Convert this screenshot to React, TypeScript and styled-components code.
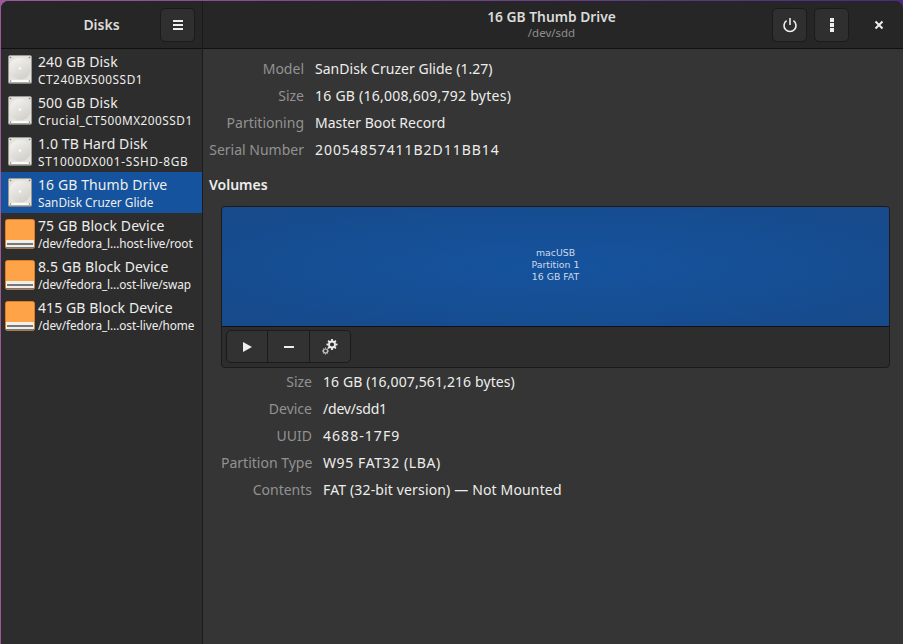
import React from 'react';
import styled, { createGlobalStyle } from 'styled-components';

const GlobalStyle = createGlobalStyle`
  html, body {
    margin: 0;
    padding: 0;
    width: 903px;
    height: 644px;
    overflow: hidden;
    background: linear-gradient(90deg, #9b5a9a, #4b2a80);
  }
  * { box-sizing: border-box; }
`;

type Drive = { title: string; sub: string; kind: 'disk' | 'block'; tracking: number; selected?: boolean };

const drives: Drive[] = [
  { title: '240 GB Disk', sub: 'CT240BX500SSD1', kind: 'disk', tracking: 0.55 },
  { title: '500 GB Disk', sub: 'Crucial_CT500MX200SSD1', kind: 'disk', tracking: 0.5 },
  { title: '1.0 TB Hard Disk', sub: 'ST1000DX001-SSHD-8GB', kind: 'disk', tracking: 0.7 },
  { title: '16 GB Thumb Drive', sub: 'SanDisk Cruzer Glide', kind: 'disk', tracking: 0, selected: true },
  { title: '75 GB Block Device', sub: '/dev/fedora_l…host-live/root', kind: 'block', tracking: -0.08 },
  { title: '8.5 GB Block Device', sub: '/dev/fedora_l…ost-live/swap', kind: 'block', tracking: -0.08 },
  { title: '415 GB Block Device', sub: '/dev/fedora_l…ost-live/home', kind: 'block', tracking: -0.08 },
];

const driveInfo: [string, string, number][] = [
  ['Model', 'SanDisk Cruzer Glide (1.27)', 0.03],
  ['Size', '16 GB (16,008,609,792 bytes)', 0.25],
  ['Partitioning', 'Master Boot Record', 0],
  ['Serial Number', '20054857411B2D11BB14', 0.95],
];

const volumeInfo: [string, string, number][] = [
  ['Size', '16 GB (16,007,561,216 bytes)', 0.1],
  ['Device', '/dev/sdd1', -0.2],
  ['UUID', '4688-17F9', 1.05],
  ['Partition Type', 'W95 FAT32 (LBA)', 0.6],
  ['Contents', 'FAT (32-bit version) — Not Mounted', 0.15],
];

function DiskIcon() {
  return (
    <svg width="24" height="29" viewBox="0 0 24 29">
      <defs>
        <linearGradient id="platter" x1="0.2" y1="0" x2="0.8" y2="1">
          <stop offset="0" stopColor="#f4f3f0" />
          <stop offset="1" stopColor="#cfcec8" />
        </linearGradient>
      </defs>
      <rect x="0.5" y="0.5" width="23" height="28" rx="1.5" fill="#e3e2dd" stroke="#9a9a95" />
      <circle cx="12" cy="13.500" r="10.800" fill="url(#platter)" />
      <circle cx="12" cy="13.500" r="1.200" fill="#fbfbf9" />
      <rect x="1" y="25" width="22" height="2.500" fill="#fafaf8" />
      <rect x="1" y="27.500" width="22" height="1" fill="#6d6d69" />
      <circle cx="2.500" cy="2.500" r="0.800" fill="#77767b" />
      <circle cx="21.500" cy="2.500" r="0.800" fill="#77767b" />
      <circle cx="2.500" cy="26" r="0.800" fill="#77767b" />
      <circle cx="21.500" cy="26" r="0.800" fill="#77767b" />
    </svg>
  );
}

function BlockIcon() {
  return (
    <svg width="30" height="30" viewBox="0 0 30 30">
      <rect x="0.5" y="0.5" width="29" height="29" rx="2" fill="#ffa348" stroke="#e07f22" />
      <rect x="1" y="21" width="28" height="8" fill="#f2efe9" />
      <rect x="2" y="24" width="26" height="2" fill="#77767b" />
      <rect x="1" y="28" width="28" height="1.5" fill="#77767b" />
    </svg>
  );
}

function MenuIcon() {
  return (
    <svg width="16" height="16" viewBox="0 0 16 16" fill="#eeeeec">
      <rect x="3" y="3" width="10" height="2" />
      <rect x="3" y="7" width="10" height="2" />
      <rect x="3" y="11" width="10" height="2" />
    </svg>
  );
}

function PowerIcon() {
  return (
    <svg width="16" height="16" viewBox="0 0 16 16" fill="none" stroke="#eeeeec" strokeWidth="1.6">
      <path d="M4.6 3.6a6 6 0 1 0 6.8 0" />
      <path d="M8 1v7" />
    </svg>
  );
}

function DotsIcon() {
  return (
    <svg width="16" height="16" viewBox="0 0 16 16" fill="#eeeeec">
      <rect x="6" y="1" width="4" height="4" />
      <rect x="6" y="6" width="4" height="4" />
      <rect x="6" y="11" width="4" height="4" />
    </svg>
  );
}

function CloseIcon() {
  return (
    <svg width="16" height="16" viewBox="0 0 16 16" stroke="#eeeeec" strokeWidth="2">
      <path d="M4.5 4.5l7 7M11.500 4.500l-7 7" />
    </svg>
  );
}

function PlayIcon() {
  return (
    <svg width="16" height="16" viewBox="0 0 16 16" fill="#eeeeec">
      <path d="M4 3l9 5-9 5z" />
    </svg>
  );
}

function MinusIcon() {
  return (
    <svg width="16" height="16" viewBox="0 0 16 16" fill="#eeeeec">
      <rect x="3" y="7" width="10" height="2" />
    </svg>
  );
}

const gearTeeth = [0, 45, 90, 135, 180, 225, 270, 315];

function GearsIcon() {
  return (
    <svg width="16" height="16" viewBox="0 0 16 16" fill="none" stroke="#eeeeec">
      <g transform="translate(10 5.500)">
        <circle r="3" strokeWidth="1.800" />
        {gearTeeth.map((a) => (
          <rect key={a} x="-0.9" y="-5.500" width="1.800" height="2" fill="#eeeeec" stroke="none" transform={`rotate(${a})`} />
        ))}
      </g>
      <g transform="translate(3.500 12)" opacity="0.8">
        <circle r="2" strokeWidth="1.100" />
        {gearTeeth.map((a) => (
          <rect key={a} x="-0.5" y="-3.500" width="1" height="1.200" fill="#eeeeec" stroke="none" transform={`rotate(${a})`} />
        ))}
      </g>
    </svg>
  );
}

export default function App() {
  return (
    <>
      <GlobalStyle />
      <Window>
        <Sidebar>
          <SideHeader>
            <SideTitle>Disks</SideTitle>
            <MenuButton>
              <MenuIcon />
            </MenuButton>
          </SideHeader>
          <DriveList>
            {drives.map((d) => (
              <DriveRow key={d.title} $selected={d.selected}>
                <IconSlot>{d.kind === 'disk' ? <DiskIcon /> : <BlockIcon />}</IconSlot>
                <DriveText>
                  <DriveTitle>{d.title}</DriveTitle>
                  <DriveSub $tracking={d.tracking}>{d.sub}</DriveSub>
                </DriveText>
              </DriveRow>
            ))}
          </DriveList>
        </Sidebar>
        <Content>
          <MainHeader>
            <HeaderTitles>
              <HeaderTitle>16 GB Thumb Drive</HeaderTitle>
              <HeaderSub>/dev/sdd</HeaderSub>
            </HeaderTitles>
            <HeaderActions>
              <HeaderButton>
                <PowerIcon />
              </HeaderButton>
              <HeaderButton>
                <DotsIcon />
              </HeaderButton>
              <CloseButton>
                <CloseIcon />
              </CloseButton>
            </HeaderActions>
          </MainHeader>
          <Main>
            <InfoGrid $labelWidth={95}>
              {driveInfo.map(([k, v, t]) => (
                <React.Fragment key={k}>
                  <InfoLabel>{k}</InfoLabel>
                  <InfoValue $tracking={t}>{v}</InfoValue>
                </React.Fragment>
              ))}
            </InfoGrid>
            <VolumesHeading>Volumes</VolumesHeading>
            <VolumePanel>
              <PartitionBar>
                <span>macUSB</span>
                <span>Partition 1</span>
                <span>16 GB FAT</span>
              </PartitionBar>
              <VolumeToolbar>
                <ButtonGroup>
                  <GroupButton>
                    <PlayIcon />
                  </GroupButton>
                  <GroupButton>
                    <MinusIcon />
                  </GroupButton>
                  <GroupButton>
                    <GearsIcon />
                  </GroupButton>
                </ButtonGroup>
              </VolumeToolbar>
            </VolumePanel>
            <VolumeGrid $labelWidth={91}>
              {volumeInfo.map(([k, v, t]) => (
                <React.Fragment key={k}>
                  <InfoLabel>{k}</InfoLabel>
                  <InfoValue $tracking={t}>{v}</InfoValue>
                </React.Fragment>
              ))}
            </VolumeGrid>
          </Main>
        </Content>
      </Window>
    </>
  );
}

const Window = styled.div`
  display: flex;
  width: 902px;
  height: 643px;
  margin: 1px 0 0 1px;
  border-radius: 8px 8px 0 0;
  overflow: hidden;
  background: #353535;
  color: #eeeeec;
  font-family: 'Noto Sans', 'Open Sans', sans-serif;
  font-size: 14px;
`;

const Sidebar = styled.aside`
  display: flex;
  flex-direction: column;
  flex: none;
  width: 202px;
  background: #2d2d2d;
  border-right: 1px solid #1b1b1b;
`;

const SideHeader = styled.div`
  display: flex;
  align-items: center;
  flex: none;
  height: 48px;
  padding: 0 7px 0 0;
  background: #262626;
  border-bottom: 1px solid #111;
`;

const SideTitle = styled.div`
  flex: 1;
  padding-left: 42px;
  text-align: center;
  font-weight: 600;
  font-size: 14px;
  color: #dcdcda;
`;

const MenuButton = styled.div`
  display: flex;
  align-items: center;
  justify-content: center;
  width: 35px;
  height: 34px;
  background: #2f2f2f;
  border: 1px solid #1b1b1b;
  border-radius: 5px;
`;

const DriveList = styled.div`
  display: flex;
  flex-direction: column;
`;

const DriveRow = styled.div<{ $selected?: boolean }>`
  display: flex;
  align-items: center;
  height: 41px;
  padding-left: 1px;
  background: ${(p) => (p.$selected ? '#15539e' : 'transparent')};
`;

const IconSlot = styled.div`
  display: flex;
  align-items: center;
  justify-content: center;
  flex: none;
  width: 36px;
  height: 100%;
`;

const DriveText = styled.div`
  display: flex;
  flex-direction: column;
  min-width: 0;
`;

const DriveTitle = styled.div`
  font-size: 14px;
  line-height: 19px;
  letter-spacing: 0.1px;
  white-space: nowrap;
`;

const DriveSub = styled.div<{ $tracking: number }>`
  font-size: 11.800px;
  line-height: 16px;
  letter-spacing: ${(p) => p.$tracking}px;
  white-space: nowrap;
`;

const Content = styled.div`
  display: flex;
  flex-direction: column;
  flex: 1;
  min-width: 0;
`;

const MainHeader = styled.header`
  position: relative;
  display: flex;
  align-items: center;
  justify-content: flex-end;
  flex: none;
  height: 48px;
  background: #262626;
  border-bottom: 1px solid #111;
`;

const HeaderTitles = styled.div`
  position: absolute;
  left: 0;
  right: 3px;
  text-align: center;
`;

const HeaderTitle = styled.div`
  font-weight: 600;
  font-size: 13.800px;
  line-height: 17px;
  color: #dcdcda;
`;

const HeaderSub = styled.div`
  font-size: 11.500px;
  line-height: 16px;
  color: #8f8f8f;
`;

const HeaderActions = styled.div`
  position: relative;
  display: flex;
  align-items: center;
  gap: 7px;
  padding-right: 7px;
`;

const HeaderButton = styled.div`
  display: flex;
  align-items: center;
  justify-content: center;
  width: 35px;
  height: 34px;
  background: #2f2f2f;
  border: 1px solid #1b1b1b;
  border-radius: 5px;
`;

const CloseButton = styled(HeaderButton)`
  margin-left: 5px;
  background: transparent;
  border-color: transparent;
`;

const Main = styled.main`
  display: flex;
  flex-direction: column;
  flex: 1;
  padding: 6px 13px 0 6px;
`;

const InfoGrid = styled.div<{ $labelWidth: number }>`
  display: grid;
  grid-template-columns: ${(p) => p.$labelWidth}px 1fr;
  grid-auto-rows: 27px;
  align-items: center;
  column-gap: 11px;
`;

const VolumeGrid = styled(InfoGrid)`
  margin: 0 0 0 12px;
`;

const InfoLabel = styled.div`
  text-align: right;
  white-space: nowrap;
  color: #929292;
`;

const InfoValue = styled.div<{ $tracking: number }>`
  white-space: nowrap;
  letter-spacing: ${(p) => p.$tracking}px;
  color: #eeeeec;
`;

const VolumesHeading = styled.div`
  margin-top: 12px;
  font-weight: 600;
  font-size: 14px;
  line-height: 19px;
`;

const VolumePanel = styled.div`
  display: flex;
  flex-direction: column;
  flex: none;
  height: 162px;
  margin: 12px 0 0 12px;
  background: #2d2d2d;
  border: 1px solid #1b1b1b;
  border-radius: 4px;
  overflow: hidden;
`;

const PartitionBar = styled.div`
  display: flex;
  flex-direction: column;
  align-items: center;
  justify-content: center;
  flex: none;
  height: 120px;
  padding-bottom: 3px;
  background: radial-gradient(ellipse at center, #15539e, #174a8a);
  border-bottom: 1px solid #111;
  font-family: 'DejaVu Sans', sans-serif;
  font-size: 9.330px;
  line-height: 12px;
  color: #cfdaea;
`;

const VolumeToolbar = styled.div`
  display: flex;
  padding: 3px 4px;
`;

const ButtonGroup = styled.div`
  display: flex;
  height: 33px;
  background: #323232;
  border: 1px solid #1b1b1b;
  border-radius: 5px;
`;

const GroupButton = styled.div`
  display: flex;
  align-items: center;
  justify-content: center;
  width: 41px;
  border-right: 1px solid #1b1b1b;

  &:nth-child(2) {
    width: 42px;
  }

  &:last-child {
    width: 40px;
    border-right: 0;
  }
`;
